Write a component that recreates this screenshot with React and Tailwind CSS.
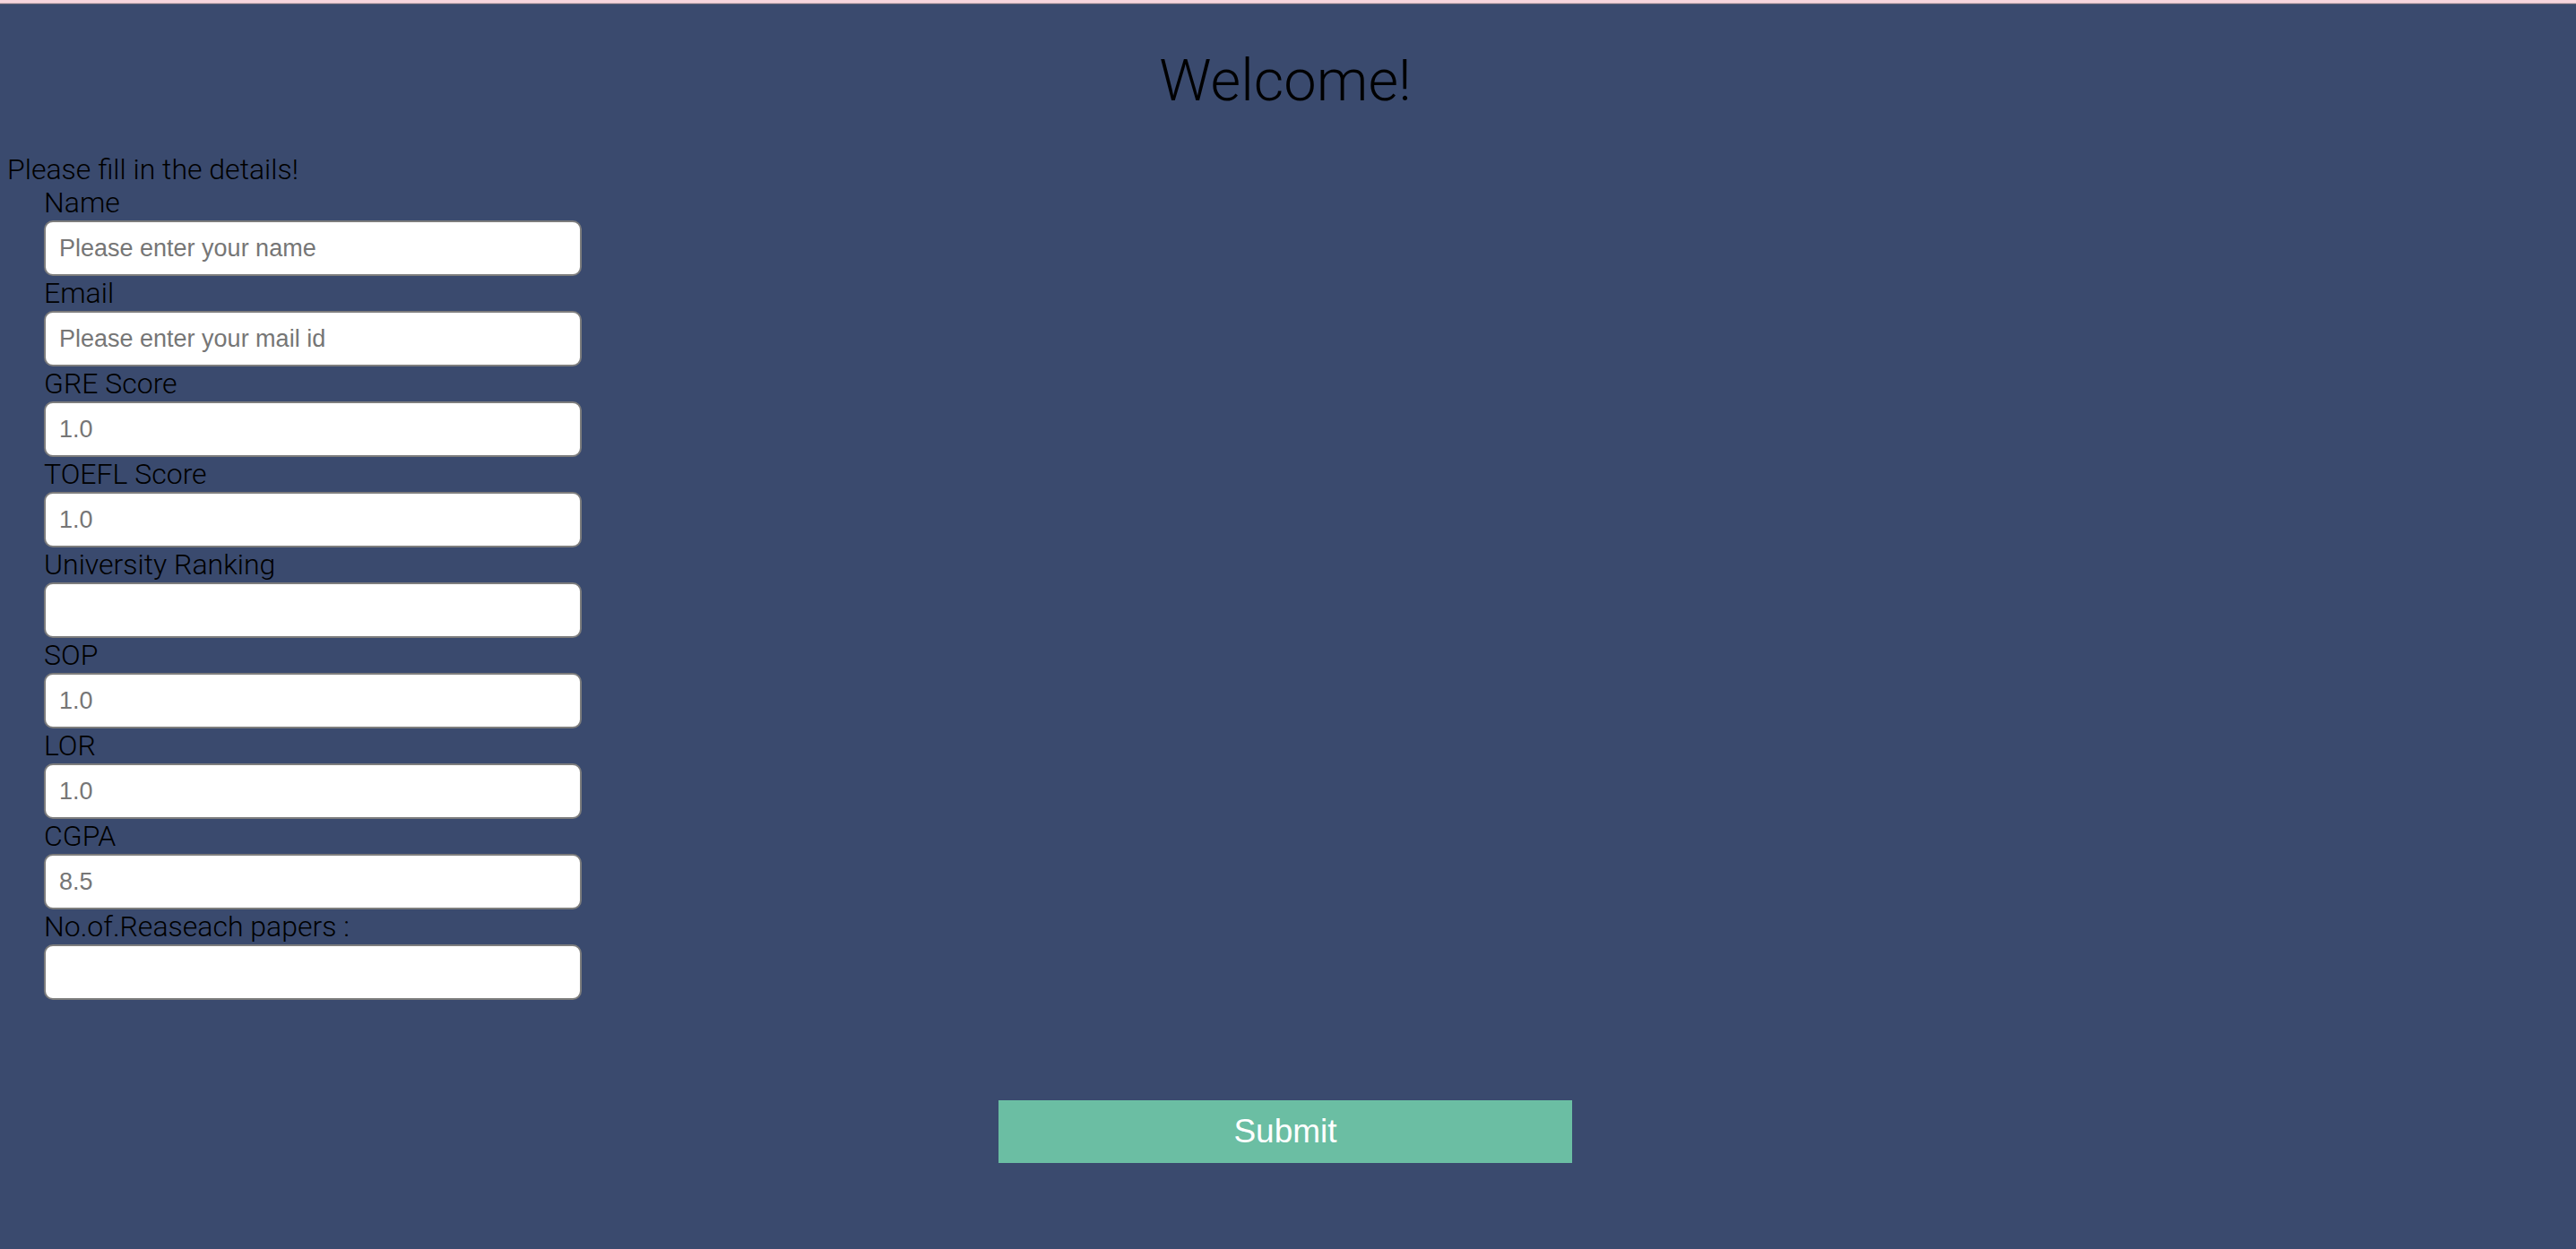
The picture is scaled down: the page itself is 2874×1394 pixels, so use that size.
import React from "react";

const fields = [
  { label: "Name", placeholder: "Please enter your name" },
  { label: "Email", placeholder: "Please enter your mail id" },
  { label: "GRE Score", placeholder: "1.0" },
  { label: "TOEFL Score", placeholder: "1.0" },
  { label: "University Ranking", placeholder: "" },
  { label: "SOP", placeholder: "1.0" },
  { label: "LOR", placeholder: "1.0" },
  { label: "CGPA", placeholder: "8.5" },
  { label: "No.of.Reaseach papers :", placeholder: "" },
];

const App = () => {
  return (
    <div className="min-h-screen bg-[#3a4a6e] font-['Roboto',sans-serif] text-black">
      {/* top strip */}
      <div className="h-[3px] bg-[#f6d6dd]" />
      <div className="h-px bg-[#d9bac2]" />
      <div className="h-px bg-[#5d6275]" />

      <div className="pt-[47px] pr-[6px] pb-[40px]">
        <h1 className="text-center text-[65px] leading-[77px] font-light">
          Welcome!
        </h1>

        <p className="mt-[42px] pl-[8px] text-[32px] leading-[36px] font-light">
          Please fill in the details!
        </p>

        <form className="mt-[2px] pl-[49px]" onSubmit={(e) => e.preventDefault()}>
          {fields.map((field, index) => (
            <div key={index}>
              <label className="block text-[32px] leading-[35px] font-light">
                {field.label}
              </label>
              <input
                type="text"
                placeholder={field.placeholder}
                className="block w-[600px] h-[62px] my-[2px] bg-white border-2 border-[#7d7d7d] rounded-[10px] px-[15px] text-[27px] font-['Liberation_Sans',sans-serif] text-[#333] placeholder:text-[#767676] outline-none"
              />
            </div>
          ))}
        </form>

        <button
          type="submit"
          className="block mx-auto mt-[112px] w-[640px] h-[70px] bg-[#6bbea3] text-white text-[37px] font-['Liberation_Sans',sans-serif]"
        >
          Submit
        </button>
      </div>
    </div>
  );
};

export default App;
